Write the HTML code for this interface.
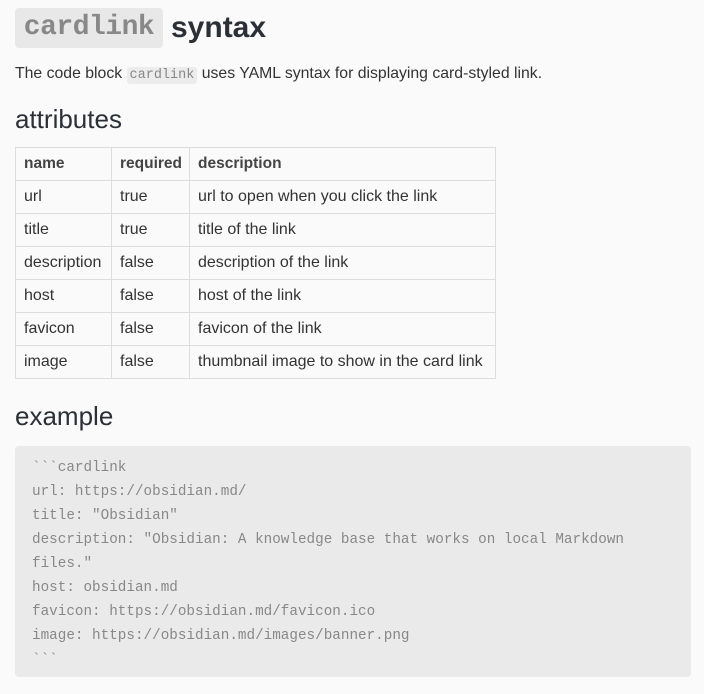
<!DOCTYPE html>
<html><head><style>
body{margin:0;background:#fafafa;font-family:"Liberation Sans",sans-serif;color:#2e3338;width:704px;height:694px;overflow:hidden;position:relative}
.a{position:absolute}
.h1code{left:15px;top:8px;width:148px;height:40px;background:#e8e8e8;border-radius:4px;font:bold 28px "Liberation Mono",monospace;color:#888;line-height:40px;text-align:center;letter-spacing:-0.5px}
.h1{left:171px;top:8px;font-weight:bold;font-size:30px;line-height:40px;color:#2b2f36}
.p{left:15px;top:64px;font-size:15.8px;line-height:20px;color:#333;white-space:nowrap}
.ic{background:#ececec;border-radius:3px;font-family:"Liberation Mono",monospace;font-size:13.5px;color:#888;padding:1px 3px}
.h2{left:15px;font-size:26px;line-height:30px;color:#2b2f36}
table{position:absolute;left:15px;top:147px;border-collapse:collapse;font-size:16px;color:#333;table-layout:fixed;width:480px}
td{border:1px solid #ddd;height:33px;padding:0 8px;box-sizing:border-box;white-space:nowrap;overflow:hidden}
tr:first-child td{font-weight:bold;color:#444;font-size:15.5px}
.code{position:absolute;left:15px;top:446px;width:676px;height:231px;background:#eaeaea;border-radius:4px;box-sizing:border-box;padding:10px 17px;font-family:"Liberation Mono",monospace;font-size:14.3px;line-height:24px;color:#888}
.code div{white-space:pre;height:24px}
</style></head><body>
<div class="a h1code">cardlink</div>
<div class="a h1">syntax</div>
<div class="a p">The code block <span class="ic">cardlink</span> uses YAML syntax for displaying card-styled link.</div>
<div class="a h2" style="top:104px">attributes</div>
<table>
<colgroup><col style="width:96px"><col style="width:78px"><col style="width:306px"></colgroup>
<tr><td>name</td><td>required</td><td>description</td></tr>
<tr><td>url</td><td>true</td><td>url to open when you click the link</td></tr>
<tr><td>title</td><td>true</td><td>title of the link</td></tr>
<tr><td>description</td><td>false</td><td>description of the link</td></tr>
<tr><td>host</td><td>false</td><td>host of the link</td></tr>
<tr><td>favicon</td><td>false</td><td>favicon of the link</td></tr>
<tr><td>image</td><td>false</td><td>thumbnail image to show in the card link</td></tr>
</table>
<div class="a h2" style="top:401px">example</div>
<div class="code">
<div>&#96;&#96;&#96;cardlink</div>
<div>url: https://obsidian.md/</div>
<div>title: "Obsidian"</div>
<div>description: "Obsidian: A knowledge base that works on local Markdown</div>
<div>files."</div>
<div>host: obsidian.md</div>
<div>favicon: https://obsidian.md/favicon.ico</div>
<div>image: https://obsidian.md/images/banner.png</div>
<div>&#96;&#96;&#96;</div>
</div>
</body></html>
